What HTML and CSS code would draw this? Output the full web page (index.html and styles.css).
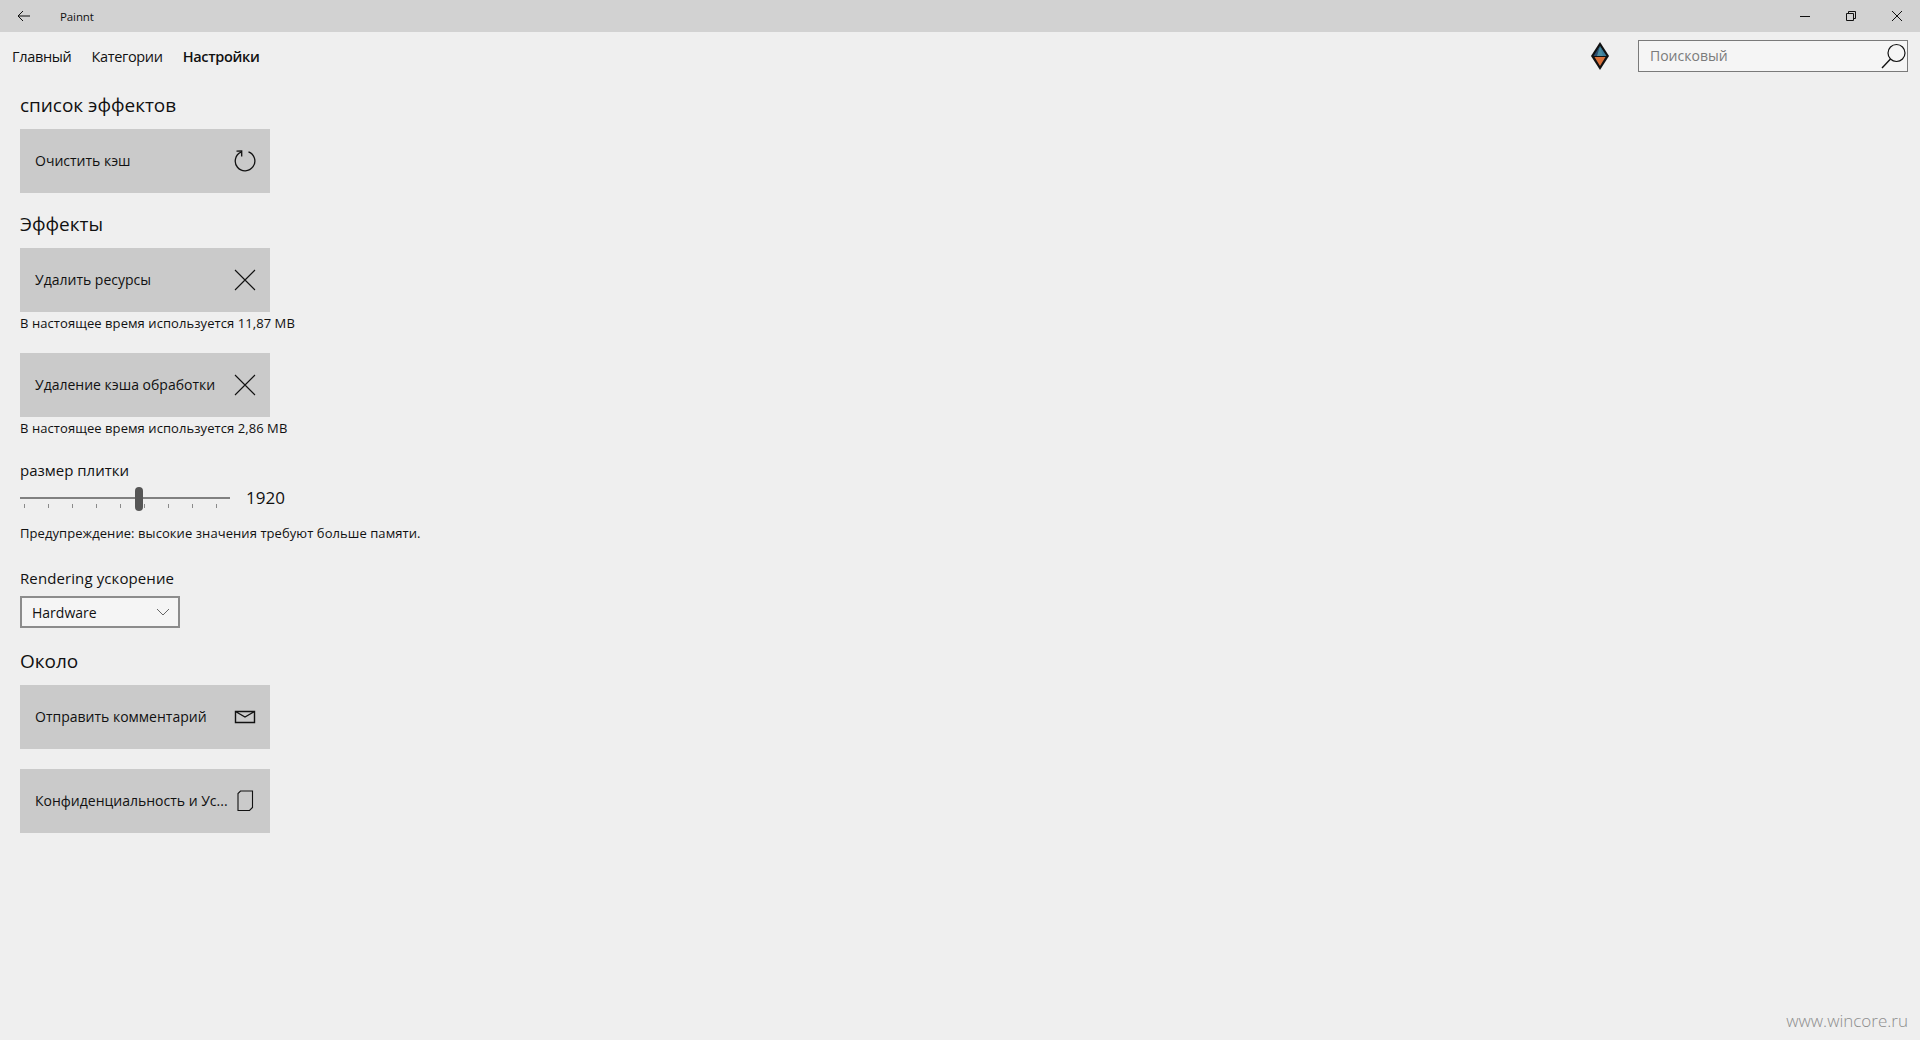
FILE: index.html
```html
<!DOCTYPE html>
<html lang="ru">
<head>
<meta charset="utf-8">
<title>Painnt</title>
<link rel="stylesheet" href="styles.css">
</head>
<body>
<div class="app">
  <header class="titlebar">
    <div class="tb-left">
      <svg class="tb-back" width="14" height="12" viewBox="0 0 14 12"><path d="M13 6H1M6 1L1 6l5 5" fill="none" stroke="#111" stroke-width="1"/></svg>
      <span class="tb-title">Painnt</span>
    </div>
    <div class="tb-controls">
      <svg width="12" height="12" viewBox="0 0 12 12"><path d="M1 6.500h10" stroke="#111" fill="none"/></svg>
      <svg width="12" height="12" viewBox="0 0 12 12"><path d="M1.500 3.500h7v7h-7zM3.500 3.500v-2h7v7h-2" stroke="#111" fill="none"/></svg>
      <svg width="12" height="12" viewBox="0 0 12 12"><path d="M1 1l10 10M11 1L1 11" stroke="#111" fill="none"/></svg>
    </div>
  </header>
  <nav class="navbar">
    <div class="tabs">
      <span class="tab">Главный</span>
      <span class="tab">Категории</span>
      <span class="tab active">Настройки</span>
    </div>
    <div class="nav-right">
      <svg class="logo" width="18" height="28" viewBox="0 0 18 28">
        <path d="M9 0L18 14 9 28 0 14z" fill="#111"/>
        <path d="M9 4L4 14h10z" fill="#4a8ca0"/>
        <path d="M9 4L2.500 14H6z" fill="#2b4d6e"/>
        <path d="M9 4l6.500 10H12z" fill="#3a7a98"/>
        <path d="M3.500 15h11L9 24z" fill="#d9713a"/>
      </svg>
      <div class="search">
        <span class="search-text">Поисковый</span>
        <svg class="search-icon" width="28" height="28" viewBox="0 0 28 28"><circle cx="16.500" cy="11" r="8.500" fill="none" stroke="#111" stroke-width="1.200"/><path d="M10.500 17L2 26" stroke="#111" stroke-width="1.400" fill="none"/></svg>
      </div>
    </div>
  </nav>
  <main class="content">
    <h2 class="heading h-first">список эффектов</h2>
    <div class="btn">
      <span class="btn-label">Очистить кэш</span>
      <svg class="btn-icon" width="22" height="22" viewBox="0 0 22 22"><path d="M7 2.100A9.800 9.800 0 1 0 14.500 1.850" fill="none" stroke="#111" stroke-width="1.300"/><path d="M2.500 1.200L7.700 1V6.500" fill="none" stroke="#111" stroke-width="1.300"/></svg>
    </div>
    <h2 class="heading h-next">Эффекты</h2>
    <div class="btn">
      <span class="btn-label">Удалить ресурсы</span>
      <svg class="btn-icon" width="22" height="22" viewBox="0 0 22 22"><path d="M1 1l20 20M21 1L1 21" fill="none" stroke="#111" stroke-width="1.100"/></svg>
    </div>
    <p class="note">В настоящее время используется 11,87 MB</p>
    <div class="btn btn-gap">
      <span class="btn-label">Удаление кэша обработки</span>
      <svg class="btn-icon" width="22" height="22" viewBox="0 0 22 22"><path d="M1 1l20 20M21 1L1 21" fill="none" stroke="#111" stroke-width="1.100"/></svg>
    </div>
    <p class="note">В настоящее время используется 2,86 MB</p>
    <div class="label slider-label">размер плитки</div>
    <div class="slider-row">
      <div class="slider">
        <div class="track"></div>
        <div class="ticks">
          <i></i><i></i><i></i><i></i><i></i><i></i><i></i><i></i><i></i>
        </div>
        <div class="thumb"></div>
      </div>
      <span class="slider-value">1920</span>
    </div>
    <p class="note warn">Предупреждение: высокие значения требуют больше памяти.</p>
    <div class="label render-label">Rendering ускорение</div>
    <div class="select">
      <span>Hardware</span>
      <svg width="14" height="8" viewBox="0 0 14 8"><path d="M1 1l6 6 6-6" fill="none" stroke="#666"/></svg>
    </div>
    <h2 class="heading h-about">Около</h2>
    <div class="btn">
      <span class="btn-label">Отправить комментарий</span>
      <svg class="btn-icon" width="22" height="16" viewBox="0 0 22 16"><path d="M1.500 2.500h19v11h-19zM1.500 2.500L11 8l9.500-5.500" fill="none" stroke="#111" stroke-width="1.400"/></svg>
    </div>
    <div class="btn btn-gap2">
      <span class="btn-label">Конфиденциальность и Ус...</span>
      <svg class="btn-icon" width="22" height="22" viewBox="0 0 22 22"><path d="M6.500 1H18.500V17.500L15.500 20.500H4V3.500z" fill="none" stroke="#111" stroke-width="1.100"/></svg>
    </div>
  </main>
  <div class="watermark">www.wincore.ru</div>
</div>
</body>
</html>
```
FILE: styles.css
```css
* { box-sizing: border-box; }
html, body { margin: 0; padding: 0; }
body {
  width: 1920px;
  height: 1040px;
  overflow: hidden;
  background: #efefef;
  color: #111;
  font-family: "Open Sans", "Noto Sans", sans-serif;
}
.app { position: relative; height: 1040px; }
.titlebar {
  height: 32px;
  background: #d2d2d2;
  display: flex;
  justify-content: space-between;
  align-items: center;
}
.tb-left { display: flex; align-items: center; padding-left: 17px; }
.tb-back { display: block; }
.tb-title { margin-left: 29px; font-size: 11.500px; letter-spacing: -0.1px; }
.tb-controls { display: flex; gap: 34px; padding-right: 17px; align-items: center; }
.tb-controls svg { display: block; }
.navbar {
  height: 48px;
  display: flex;
  justify-content: space-between;
  align-items: center;
}
.tabs { display: flex; gap: 20px; padding-left: 12px; font-size: 14.500px; letter-spacing: -0.33px; }
.tab.active { font-weight: 600; }
.nav-right { display: flex; align-items: center; padding-right: 12px; }
.logo { display: block; margin-right: 29px; }
.search {
  width: 270px;
  height: 32px;
  background: #f5f5f5;
  border: 1px solid #7a7a7a;
  display: flex;
  align-items: center;
  justify-content: space-between;
  padding-left: 11px;
  overflow: visible;
}
.search-text { font-size: 14px; color: #7b7b7b; padding-bottom: 2px; }
.search-icon { display: block; margin-right: -1px; }
.content { padding-left: 20px; }
.heading { margin: 0; font-weight: 400; font-size: 19px; line-height: 26px; letter-spacing: -0.03px; }
.h-first { margin-top: 12px; margin-bottom: 11px; }
.h-next { margin-top: 18px; margin-bottom: 11px; }
.h-about { margin-top: 20px; margin-bottom: 11px; }
.btn {
  width: 250px;
  height: 64px;
  background: #cacaca;
  display: flex;
  align-items: center;
  justify-content: space-between;
  padding: 0 14px 0 15px;
}
.btn-label { font-size: 14px; white-space: nowrap; padding-bottom: 1px; }
.btn-icon { display: block; flex: none; }
.btn-gap { margin-top: 20px; }
.btn-gap2 { margin-top: 20px; }
.note { margin: 0; font-size: 13px; line-height: 16px; letter-spacing: 0.07px; padding-top: 3px; height: 21px; white-space: nowrap; }
.label { font-size: 15px; line-height: 20px; }
.slider-label { margin-top: 22px; }
.slider-row { display: flex; align-items: center; height: 32px; margin-top: 2px; }
.slider { position: relative; width: 210px; height: 32px; }
.track { position: absolute; left: 0; right: 0; top: 15px; height: 2px; background: #808080; }
.ticks { position: absolute; left: 4px; top: 22px; width: 193px; display: flex; justify-content: space-between; }
.ticks i { display: block; width: 1px; height: 4px; background: #8a8a8a; }
.thumb { position: absolute; left: 115px; top: 5px; width: 8px; height: 24px; border-radius: 4px; background: #555; }
.slider-value { margin-left: 16px; font-size: 17px; padding-bottom: 2px; }
.warn { margin-top: 8px; }
.render-label { margin-top: 25px; letter-spacing: 0.1px; }
.select {
  width: 160px;
  height: 32px;
  margin-top: 8px;
  background: #f5f5f5;
  border: 2px solid #8c8c8c;
  display: flex;
  align-items: center;
  justify-content: space-between;
  padding: 0 8px 0 10px;
  font-size: 14px;
}
.watermark {
  position: absolute;
  right: 12px;
  bottom: 8px;
  font-size: 17px;
  font-weight: 300;
  color: #8d8d8d;
}
```
